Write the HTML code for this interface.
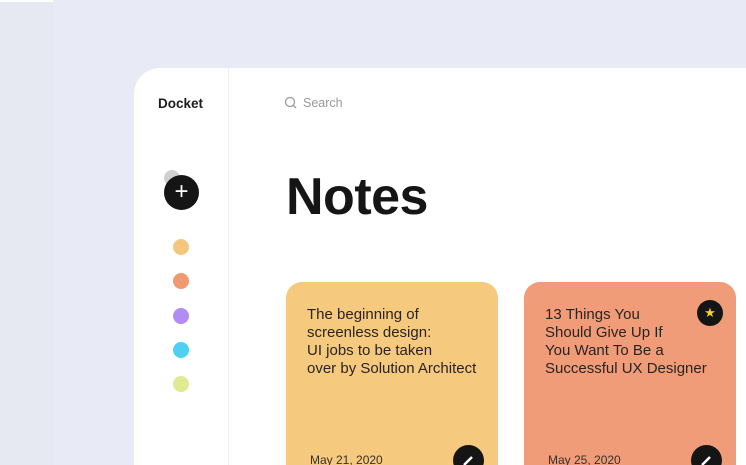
<!DOCTYPE html><html style="overflow:hidden"><head><style>
html,body{margin:0;width:746px;height:465px;overflow:hidden}
body{background:#e8ebf5;font-family:"Liberation Sans",sans-serif;position:relative}
.abs{position:absolute}
.dot{position:absolute;left:173px;width:16px;height:16px;border-radius:50%}
.card{position:absolute;top:282px;width:212px;height:200px;border-radius:16px;color:#2a2320}
.card p{margin:0;position:absolute;left:21px;top:24px;font-size:15px;line-height:18px}
.date{position:absolute;left:24px;top:171px;font-size:12px;color:#3a302a}
.pen{position:absolute;left:167px;top:163px;width:31px;height:31px;border-radius:50%;background:#151515}
</style></head><body>
<div class="abs" style="left:0;top:0;width:53px;height:465px;background:#e6e9f2"></div>
<div class="abs" style="left:0;top:0;width:53px;height:2px;background:#fff"></div>
<div class="abs" style="left:134px;top:68px;width:640px;height:397px;background:#fff;border-radius:26px 0 0 0"></div>
<div class="abs" style="left:228px;top:68px;width:1px;height:397px;background:#eeeeee"></div>
<div class="abs" style="left:158px;top:96px;font-size:13.5px;font-weight:bold;color:#1c1c1c">Docket</div>
<svg class="abs" style="left:284px;top:96px" width="14" height="14" viewBox="0 0 14 14"><circle cx="6" cy="6" r="4.5" fill="none" stroke="#999" stroke-width="1.3"/><path d="M9.3 9.3L12 12" stroke="#999" stroke-width="1.3"/></svg>
<div class="abs" style="left:303px;top:96px;font-size:12.5px;color:#999">Search</div>
<div class="abs" style="left:286px;top:167px;font-size:52px;font-weight:bold;color:#151515;letter-spacing:-0.5px">Notes</div>
<div class="abs" style="left:164px;top:170px;width:16px;height:16px;border-radius:50%;background:#d0d0d0"></div>
<div class="abs" style="left:164px;top:175px;width:35px;height:35px;border-radius:50%;background:#151515;color:#fff;font-size:24px;line-height:33px;text-align:center">+</div>
<div class="dot" style="top:239px;background:#f5c77e"></div>
<div class="dot" style="top:273px;background:#f09a72"></div>
<div class="dot" style="top:308px;background:#b28cf5"></div>
<div class="dot" style="top:342px;background:#4dd0f2"></div>
<div class="dot" style="top:376px;background:#e1e992"></div>
<div class="card" style="left:286px;background:#f5c97e"><p>The beginning of<br>screenless design:<br>UI jobs to be taken<br>over by Solution Architect</p><div class="date">May 21, 2020</div><div class="pen"><svg width="31" height="31"><path d="M11 20L19 12" stroke="#fff" stroke-width="2.5"/></svg></div></div>
<div class="card" style="left:524px;background:#f09c79"><p>13 Things You<br>Should Give Up If<br>You Want To Be a<br>Successful UX Designer</p><div class="date">May 25, 2020</div><div class="pen"><svg width="31" height="31"><path d="M11 20L19 12" stroke="#fff" stroke-width="2.5"/></svg></div>
<div class="abs" style="left:173px;top:18px;width:26px;height:26px;border-radius:50%;background:#151515;color:#f7d21e;font-size:13px;line-height:26px;text-align:center">★</div></div>
</body></html>
